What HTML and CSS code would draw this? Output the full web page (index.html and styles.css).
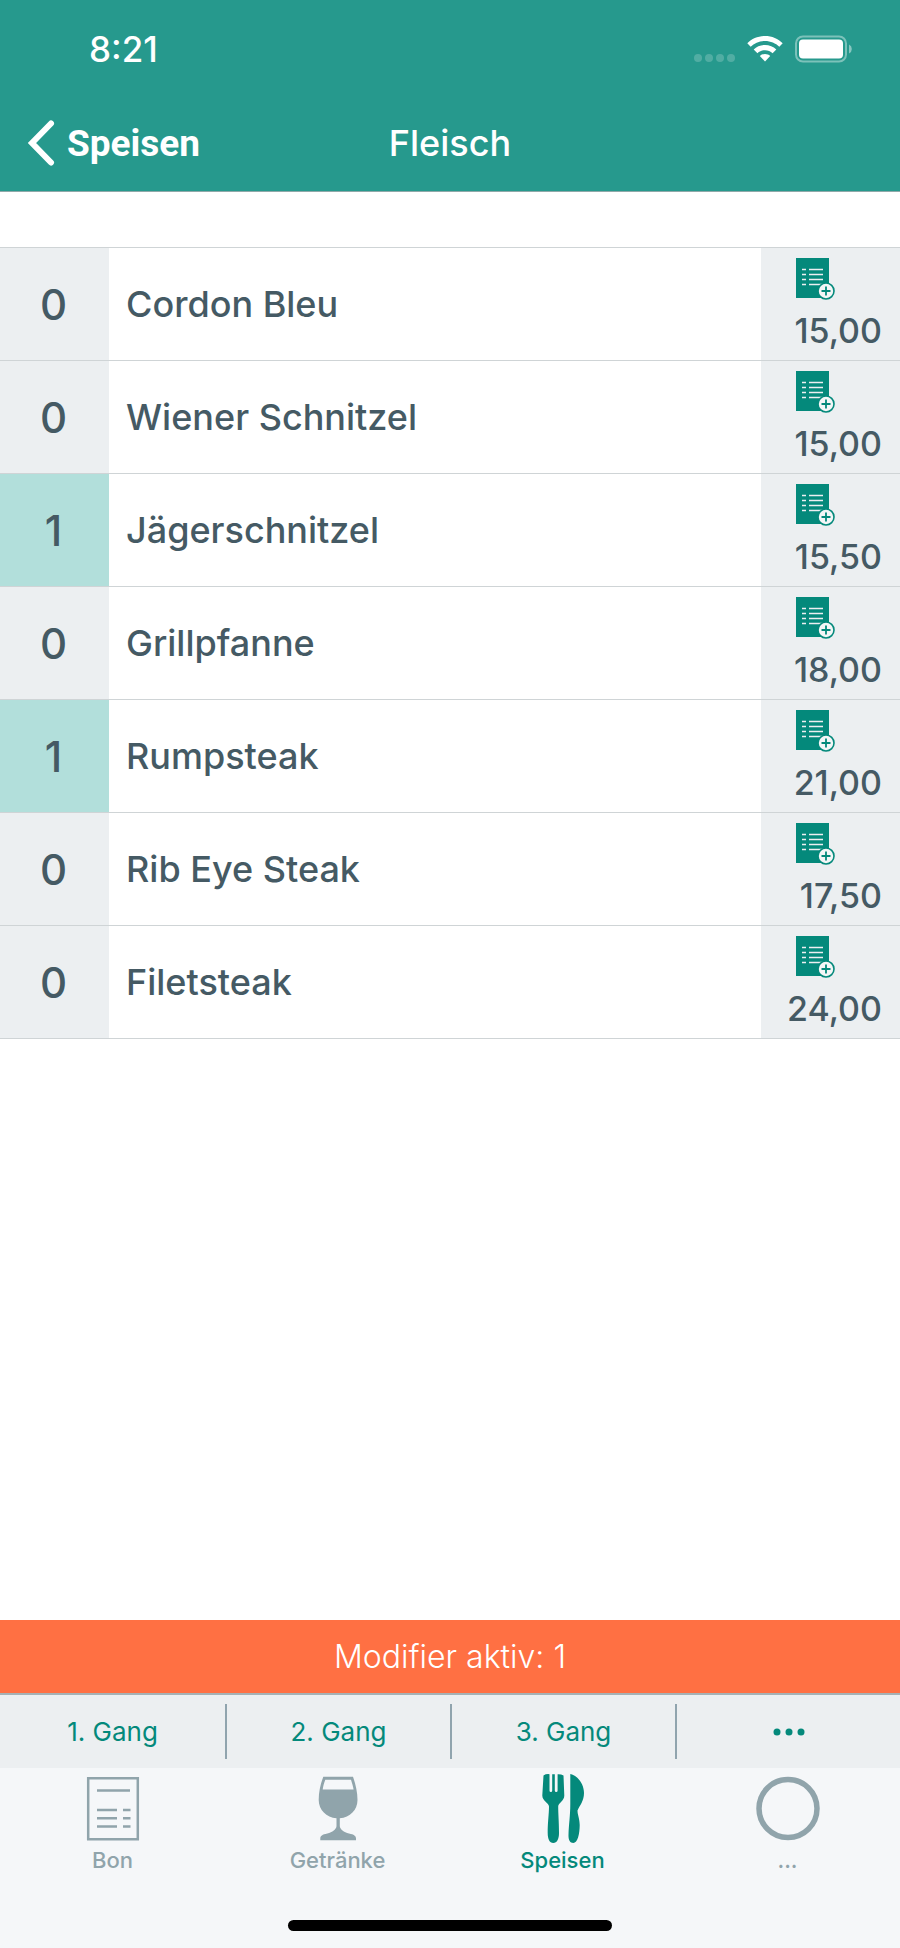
FILE: index.html
```html
<!DOCTYPE html>
<html lang="de">
<head>
    <meta charset="UTF-8">
    <meta name="viewport" content="width=device-width, initial-scale=1.0">
    <title>Fleisch</title>
    <link rel="stylesheet" href="styles.css">
</head>
<body>
    <!-- Icon shared by all menu rows -->
    <svg class="sprite" width="0" height="0" aria-hidden="true">
        <symbol id="modifier-icon" viewBox="0 0 40 42">
            <rect x="0" y="0" width="33" height="40" fill="#04897b"/>
            <path d="M6 11.5h4M13 11.5h14M6 16.5h4M13 16.5h14M6 21.5h4M13 21.5h14M6 26.5h4M13 26.5h14" stroke="#eceff1" stroke-width="1.6"/>
            <circle cx="30" cy="33" r="8" fill="#f4f6f7" stroke="#04897b" stroke-width="1.6"/>
            <path d="M25.5 33h9M30 28.5v9" stroke="#04897b" stroke-width="1.8"/>
        </symbol>
    </svg>

    <header class="header">
        <div class="status-bar">
            <span class="clock">8:21</span>
            <div class="status-icons">
                <svg width="42" height="10" viewBox="0 0 42 10" fill="#fff" fill-opacity="0.2">
                    <circle cx="5" cy="5" r="4"/>
                    <circle cx="16" cy="5" r="4"/>
                    <circle cx="27" cy="5" r="4"/>
                    <circle cx="38" cy="5" r="4"/>
                </svg>
                <svg width="36" height="28" viewBox="0 0 36 28" fill="#fff">
                    <path d="M18 1C11 1 4.800 3.700 0.300 8.300L3.700 11.800C7.300 8.200 12.400 6 18 6S28.700 8.200 32.300 11.800L35.700 8.300C31.200 3.700 25 1 18 1Z"/>
                    <path d="M18 10C13.600 10 9.600 11.700 6.700 14.500L10.400 18.200C12.400 16.300 15 15.200 18 15.200S23.600 16.300 25.600 18.200L29.300 14.500C26.400 11.700 22.400 10 18 10Z"/>
                    <path d="M18 19C16 19 14.200 19.700 12.800 20.900L18 26.500L23.200 20.900C21.800 19.700 20 19 18 19Z"/>
                </svg>
                <svg width="58" height="28" viewBox="0 0 58 28">
                    <rect x="1" y="1.500" width="50" height="25" rx="7" fill="none" stroke="#fff" stroke-opacity="0.4" stroke-width="2"/>
                    <rect x="4" y="4.500" width="44" height="19" rx="4" fill="#fff"/>
                    <path d="M54 9.500a5 5 0 0 1 0 9z" fill="#fff" fill-opacity="0.450"/>
                </svg>
            </div>
        </div>
        <nav class="nav-bar">
            <a class="back" href="#speisen">
                <svg width="28" height="48" viewBox="0 0 28 48" fill="none" stroke="#fff" stroke-width="6" stroke-linecap="round" stroke-linejoin="miter">
                    <path d="M24 4.500L5 24L24 43.500"/>
                </svg>
                Speisen
            </a>
            <h1>Fleisch</h1>
        </nav>
    </header>

    <main>
        <ul class="menu">
            <li class="item">
                <span class="count">0</span>
                <span class="name">Cordon Bleu</span>
                <div class="side">
                    <button class="modifier" aria-label="Modifier für Cordon Bleu"><svg><use href="#modifier-icon"/></svg></button>
                    <span class="price">15,00</span>
                </div>
            </li>
            <li class="item">
                <span class="count">0</span>
                <span class="name">Wiener Schnitzel</span>
                <div class="side">
                    <button class="modifier" aria-label="Modifier für Wiener Schnitzel"><svg><use href="#modifier-icon"/></svg></button>
                    <span class="price">15,00</span>
                </div>
            </li>
            <li class="item selected">
                <span class="count">1</span>
                <span class="name">Jägerschnitzel</span>
                <div class="side">
                    <button class="modifier" aria-label="Modifier für Jägerschnitzel"><svg><use href="#modifier-icon"/></svg></button>
                    <span class="price">15,50</span>
                </div>
            </li>
            <li class="item">
                <span class="count">0</span>
                <span class="name">Grillpfanne</span>
                <div class="side">
                    <button class="modifier" aria-label="Modifier für Grillpfanne"><svg><use href="#modifier-icon"/></svg></button>
                    <span class="price">18,00</span>
                </div>
            </li>
            <li class="item selected">
                <span class="count">1</span>
                <span class="name">Rumpsteak</span>
                <div class="side">
                    <button class="modifier" aria-label="Modifier für Rumpsteak"><svg><use href="#modifier-icon"/></svg></button>
                    <span class="price">21,00</span>
                </div>
            </li>
            <li class="item">
                <span class="count">0</span>
                <span class="name">Rib Eye Steak</span>
                <div class="side">
                    <button class="modifier" aria-label="Modifier für Rib Eye Steak"><svg><use href="#modifier-icon"/></svg></button>
                    <span class="price">17,50</span>
                </div>
            </li>
            <li class="item">
                <span class="count">0</span>
                <span class="name">Filetsteak</span>
                <div class="side">
                    <button class="modifier" aria-label="Modifier für Filetsteak"><svg><use href="#modifier-icon"/></svg></button>
                    <span class="price">24,00</span>
                </div>
            </li>
        </ul>
    </main>

    <footer>
        <p class="notice">Modifier aktiv: 1</p>

        <div class="courses">
            <button>1. Gang</button>
            <button>2. Gang</button>
            <button>3. Gang</button>
            <button aria-label="Weitere Gänge">
                <svg width="32" height="8" viewBox="0 0 32 8" fill="#04897b">
                    <circle cx="4" cy="4" r="3.500"/>
                    <circle cx="16" cy="4" r="3.500"/>
                    <circle cx="28" cy="4" r="3.500"/>
                </svg>
            </button>
        </div>

        <nav class="tabs">
            <a href="#bon">
                <svg width="72" height="72" viewBox="0 0 72 72" fill="none" stroke="#90a4ab" stroke-width="2.500">
                    <path d="M11.200 5.200h49.600v61.100H11.200z"/>
                    <path d="M20 17.500h33M20 37h20M46 37h7.500M20 45.200h20M46 45.200h7.500M20 53.500h20M46 53.500h7.500"/>
                </svg>
                Bon
            </a>
            <a href="#getraenke">
                <svg width="72" height="72" viewBox="0 0 72 72" fill="#90a4ab">
                    <path fill-rule="evenodd" d="M21.300 3.700H51C53.500 11 55.500 19 55.500 27C55.500 37 48 44.500 37.800 45.300V53C37.800 56 42 59.500 47 60.500C52 61.500 54 63 54 65.500V67.300H18.300V65.500C18.300 63 20.300 61.500 25.300 60.500C30.300 59.500 34.500 56 34.500 53V45.300C24.500 44.500 16.700 37 16.700 27C16.700 19 18.500 11 21.300 3.700ZM23.300 6.800C22 10 21.200 13 20.700 16.500H51.600C51 13 50 10 49 6.800Z"/>
                </svg>
                Getränke
            </a>
            <a class="active" href="#speisen">
                <svg width="72" height="72" viewBox="0 0 72 72" fill="#04897b">
                    <path d="M16.500 2.500Q19 0.800 22.500 1.200V17.500Q22.500 19 23.900 19Q25.200 19 25.200 17.500V1.200H27.800V17.500Q27.800 19 29.200 19Q30.600 19 30.600 17.500V1.200Q34 1 36.500 2.500L37.300 22.500C37.300 28 31.200 30 31.200 33.500C31.200 41 32 49 32 60C32 66 30 70 26.300 70C22.500 70 20.700 66 20.700 60C20.700 49 22 41 22 33.500C22 30 15.300 28 15.300 22.500Z"/>
                    <path d="M43.300 1C50 2.200 57 10.500 57 20C57 28 53 32 50.500 37.500C50.500 42 52.700 45.500 52.700 52C52.700 61 50.500 70 46.300 70C43 70 41.300 67 41.500 62C41.800 51 43.300 43 43.300 31Z"/>
                </svg>
                Speisen
            </a>
            <a href="#mehr">
                <svg width="72" height="72" viewBox="0 0 72 72" fill="none" stroke="#90a4ab" stroke-width="5.500">
                    <circle cx="36" cy="35.500" r="29"/>
                </svg>
                ...
            </a>
        </nav>

        <div class="home-indicator"></div>
    </footer>
</body>
</html>
```
FILE: styles.css
```css
* {
    box-sizing: border-box;
    margin: 0;
    padding: 0;
}

body {
    font-family: 'Inter', sans-serif;
    display: flex;
    flex-direction: column;
    min-height: 100vh;
    background-color: #fff;
    color: #455a64;
}

a {
    color: inherit;
    text-decoration: none;
}

button {
    font-family: inherit;
    background: none;
    border: none;
    cursor: pointer;
}

svg {
    display: block;
}

.sprite {
    position: absolute;
}

/* Header */
.header {
    background-color: #26998d;
    color: #fff;
    border-bottom: 1px solid #8fa9a9;
}

.status-bar {
    display: flex;
    justify-content: space-between;
    align-items: center;
    height: 98px;
    padding: 0 47px 0 89px;
}

.clock {
    font-size: 35px;
    font-weight: 500;
}

.status-icons {
    display: flex;
    align-items: flex-end;
    gap: 12px;
}

.nav-bar {
    display: grid;
    grid-template-columns: 1fr auto 1fr;
    align-items: center;
    height: 93px;
    padding: 0 27px 3px;
}

.back {
    display: flex;
    align-items: center;
    gap: 12px;
    font-family: 'Roboto', sans-serif;
    font-size: 37px;
    font-weight: 700;
}

h1 {
    font-size: 36px;
    font-weight: 500;
}

/* Menu list */
main {
    flex: 1;
    padding-top: 55px;
}

.menu {
    list-style: none;
    border-top: 1px solid #cfd4d6;
}

.item {
    display: flex;
    height: 113px;
    border-bottom: 1px solid #cfd4d6;
}

.count {
    display: flex;
    justify-content: center;
    align-items: center;
    width: 109px;
    padding-right: 2px;
    background-color: #eceff1;
    font-size: 42px;
    font-weight: 500;
}

.selected .count {
    background-color: #b2dfdb;
}

.name {
    display: flex;
    align-items: center;
    flex: 1;
    padding-left: 17px;
    font-size: 36px;
    font-weight: 500;
}

.side {
    display: flex;
    flex-direction: column;
    justify-content: space-between;
    width: 139px;
    padding: 10px 18px 8px 0;
    background-color: #eceff1;
}

.modifier, .modifier svg {
    width: 40px;
    height: 42px;
}

.modifier {
    margin-left: 35px;
}

.price {
    font-size: 34px;
    font-weight: 500;
    line-height: 42px;
    text-align: right;
}

/* Bottom bars */
footer {
    background-color: #f5f7f9;
}

.notice {
    background-color: #ff7043;
    border-bottom: 2px solid #a5b1b5;
    color: #fff;
    font-size: 32px;
    font-weight: 300;
    line-height: 73px;
    text-align: center;
}

.courses {
    display: grid;
    grid-template-columns: repeat(4, 1fr);
    height: 73px;
    padding: 9px 0;
    background-color: #eceff1;
}

.courses button {
    display: flex;
    justify-content: center;
    align-items: center;
    color: #04897b;
    font-size: 26px;
}

.courses button + button {
    border-left: 2px solid #90a4ae;
}

.tabs {
    display: grid;
    grid-template-columns: repeat(4, 1fr);
    padding-top: 5px;
}

.tabs a {
    display: flex;
    flex-direction: column;
    align-items: center;
    color: #90a4ab;
    font-size: 22px;
    font-weight: 500;
    line-height: 30px;
}

.tabs .active {
    color: #04897b;
}

.home-indicator {
    width: 36%;
    height: 11px;
    margin: 45px auto 17px;
    border-radius: 6px;
    background-color: #000;
}
```
